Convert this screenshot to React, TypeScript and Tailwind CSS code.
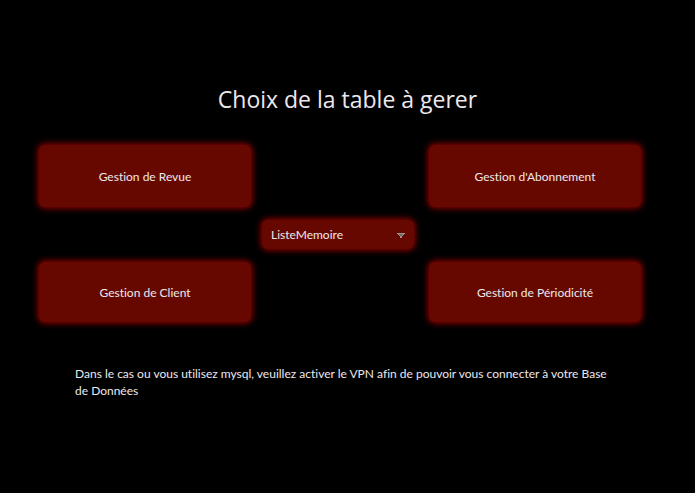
import { useState } from "react";

const glow = "bg-[#660800] shadow-[0_0_6px_1px_#a00000]";

function TableButton({ label, className }: { label: string; className: string }) {
  return (
    <button type="button" className={`rounded-md text-center ${glow} ${className}`}>
      {label}
    </button>
  );
}

export default function App() {
  const [source, setSource] = useState("ListeMemoire");

  return (
    <main className="min-h-screen bg-black pt-[79px] pb-16 font-['Lato','Open_Sans',sans-serif] text-[12px] leading-[17px] text-[#ece8ee] [font-variant-ligatures:none]">
      <h1 className="text-center font-['Open_Sans','Noto_Sans',sans-serif] text-[23px] leading-10">
        Choix de la table à gerer
      </h1>

      <div className="mt-[26px] mr-[54px] ml-[39px] grid grid-cols-[212fr_178fr_212fr] gap-y-[13px]">
        <TableButton label="Gestion de Revue" className="col-start-1 h-[62px]" />
        <TableButton label="Gestion d'Abonnement" className="col-start-3 h-[62px]" />

        <div className="relative col-start-2 mr-[15px] ml-[11px]">
          <select
            aria-label="Source de données"
            value={source}
            onChange={(event) => setSource(event.target.value)}
            className={`block h-[29px] w-full appearance-none rounded-md pr-6 pl-[9px] ${glow}`}
          >
            <option>ListeMemoire</option>
            <option>MySQL</option>
          </select>
          <svg
            aria-hidden="true"
            viewBox="0 0 8 5"
            shapeRendering="crispEdges"
            className="pointer-events-none absolute top-[13px] right-[9px] h-[5px] w-2"
          >
            <path d="M0 0h8v1H7v1H6v1H5v2H3V3H2V2H1V1H0z" fill="#9c9290" />
            <path d="M2 1h4v1H5v1H3V2H2z" fill="#6b6a68" />
          </svg>
        </div>

        <TableButton label="Gestion de Client" className="col-start-1 h-[60px]" />
        <TableButton label="Gestion de Périodicité" className="col-start-3 h-[60px]" />
      </div>

      <p className="mt-[43px] mr-[78px] ml-[75px]">
        Dans le cas ou vous utilisez mysql, veuillez activer le VPN afin de pouvoir vous connecter à votre Base de
        Données
      </p>
    </main>
  );
}
